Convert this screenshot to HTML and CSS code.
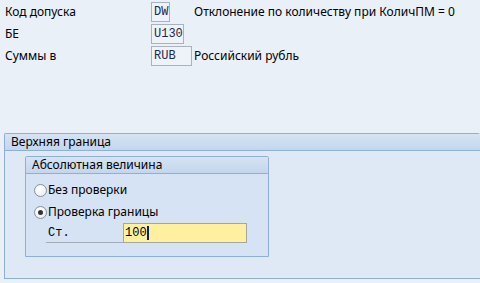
FILE: index.html
```html
<!DOCTYPE html>
<html>
<head>
    <title>Допуск</title>
    <link rel="stylesheet" href="styles.css">
</head>
<body>
    <div class="fields">
        <div class="row">
            <span class="label">Код допуска</span>
            <span class="cell"><span class="field w-dw">DW</span></span>
            <span class="desc">Отклонение по количеству при КоличПМ = 0</span>
        </div>
        <div class="row">
            <span class="label">БЕ</span>
            <span class="cell"><span class="field w-be">U130</span></span>
        </div>
        <div class="row">
            <span class="label">Суммы в</span>
            <span class="cell"><span class="field w-cur">RUB</span></span>
            <span class="desc">Российский рубль</span>
        </div>
    </div>

    <div class="group outer">
        <div class="group-title">Верхняя граница</div>
        <div class="group-body">
            <div class="group inner">
                <div class="group-title">Абсолютная величина</div>
                <div class="group-body">
                    <label class="radio-row">
                        <span class="radio"></span>
                        <span>Без проверки</span>
                    </label>
                    <label class="radio-row">
                        <span class="radio checked"></span>
                        <span>Проверка границы</span>
                    </label>
                    <div class="input-row">
                        <span class="input-label">Ст.</span>
                        <span class="input">100<span class="cursor"></span></span>
                    </div>
                </div>
            </div>
        </div>
    </div>
</body>
</html>
```

FILE: styles.css
```css
/* SAP-like screen */
body {
    margin: 0;
    background-color: #e9f0f8;
    font-family: "Noto Sans", sans-serif;
    font-size: 12px;
    line-height: 16px;
    color: #000;
    height: 283px;
    overflow: hidden;
}

.fields {
    padding-top: 2px;
    height: 133px;
    box-sizing: border-box;
}

.row {
    display: flex;
    align-items: center;
    height: 20px;
    margin-bottom: 2px;
}

.label {
    width: 146px;
    padding-left: 5px;
}

.cell {
    width: 43px;
}

.field {
    display: block;
    box-sizing: border-box;
    height: 20px;
    border: 1px solid #a9b3bd;
    background-color: #eef3f9;
    font-family: "Liberation Mono", monospace;
    font-size: 12px;
    line-height: 18px;
    color: #1a2850;
    padding-left: 2px;
    white-space: nowrap;
}

.w-dw { width: 19px; }
.w-be { width: 33px; }
.w-cur { width: 41px; }

.group {
    box-sizing: border-box;
    border: 1px solid #8fb0d6;
    border-radius: 2px 2px 0 0;
}

.group-title {
    height: 16px;
    line-height: 16px;
    padding-left: 6px;
    background: linear-gradient(#d6e4f3, #c2d6ee);
    border-bottom: 1px solid #8fb0d6;
}

.outer {
    margin-left: 4px;
    height: 146px;
    border-right: none;
    background-color: #dfe9f5;
}

.outer > .group-body {
    padding: 5px 0 0 20px;
}

.inner {
    width: 244px;
    height: 101px;
    background-color: #d5e3f4;
}

.inner > .group-body {
    padding: 5px 0 0 8px;
}

.radio-row {
    display: flex;
    align-items: center;
    height: 22px;
}

.radio {
    box-sizing: border-box;
    width: 13px;
    height: 13px;
    border: 1px solid #8a8f96;
    border-radius: 50%;
    background: radial-gradient(circle at 40% 35%, #ffffff, #e6e9ee);
    margin-right: 1px;
    position: relative;
}

.radio.checked::after {
    content: "";
    position: absolute;
    left: 3px;
    top: 3px;
    width: 5px;
    height: 5px;
    border-radius: 50%;
    background-color: #333;
}

.input-row {
    display: flex;
    align-items: center;
    height: 20px;
    margin-left: 12px;
}

.input-label {
    width: 77px;
    height: 19px;
    line-height: 19px;
    padding-left: 2px;
    box-sizing: border-box;
    border-bottom: 1px solid #a4adb7;
    font-family: "Liberation Mono", monospace;
    font-size: 12px;
}

.input {
    box-sizing: border-box;
    width: 124px;
    height: 20px;
    border: 1px solid #a6a69a;
    background-color: #fff0a0;
    font-family: "Liberation Mono", monospace;
    font-size: 12px;
    line-height: 18px;
    padding-left: 1px;
    display: flex;
    align-items: center;
}

.cursor {
    display: inline-block;
    width: 2px;
    height: 14px;
    background-color: #0a1f6e;
}
```
